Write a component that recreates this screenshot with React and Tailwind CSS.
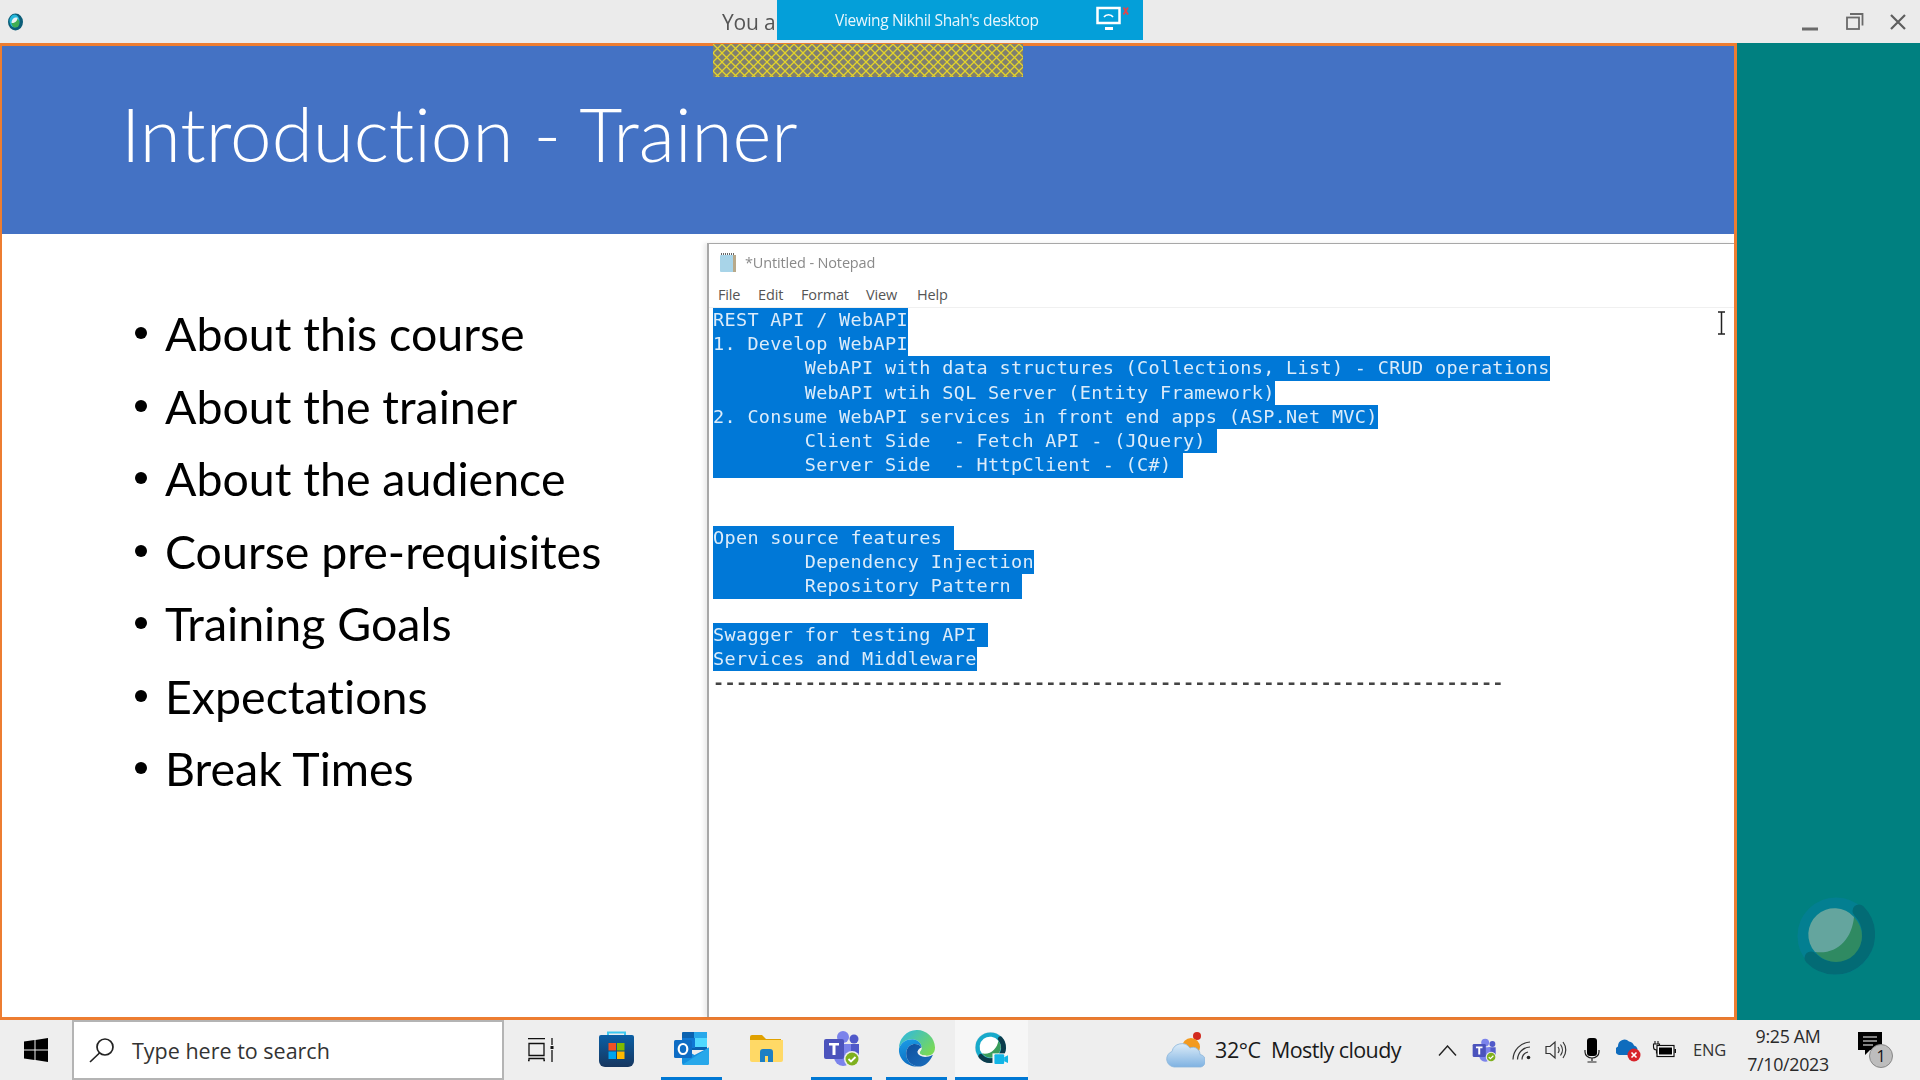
import React from "react";

const bullets = ["About this course","About the trainer","About the audience","Course pre-requisites","Training Goals","Expectations","Break Times"];
const T = "        ";
const noteLines = [
  ["REST API / WebAPI",1],["1. Develop WebAPI",1],
  [T+"WebAPI with data structures (Collections, List) - CRUD operations",1],
  [T+"WebAPI wtih SQL Server (Entity Framework)",1],
  ["2. Consume WebAPI services in front end apps (ASP.Net MVC)",1],
  [T+"Client Side  - Fetch API - (JQuery) ",1],
  [T+"Server Side  - HttpClient - (C#) ",1],
  ["",0],["",0],
  ["Open source features ",1],
  [T+"Dependency Injection",1],
  [T+"Repository Pattern ",1],
  ["",0],
  ["Swagger for testing API ",1],
  ["Services and Middleware",1],
  ["-".repeat(69),0],
];

const WebexIcon = ({size=32}) => (
  <svg width={size} height={size} viewBox="0 0 36 36">
    <circle cx="17" cy="17" r="16" fill="#d9dfe2"/>
    <circle cx="17" cy="17" r="13" fill="none" stroke="#18aacb" strokeWidth="5"/>
    <path d="M27 8 A13 13 0 0 1 7 26" fill="none" stroke="#0b3c4c" strokeWidth="5" strokeLinecap="round"/>
    <circle cx="17" cy="17" r="10.500" fill="#3a9e5c"/>
    <path d="M8 23 A10.500 10.500 0 0 1 25 10 C24 18 17 25 8 23Z" fill="#ffffff"/>
    <rect x="19" y="23" width="17" height="13" fill="#f6f6f6"/>
    <rect x="21" y="24" width="10" height="10" rx="1" fill="#12b5e6"/>
    <path d="M31 27l4-2v8l-4-2z" fill="#12b5e6"/>
  </svg>
);

const TeamsIcon = ({size=38}) => (
  <svg width={size} height={size} viewBox="0 0 38 38">
    <circle cx="20" cy="7" r="6" fill="#7b83eb"/>
    <circle cx="31" cy="9" r="4.500" fill="#5059c9"/>
    <path d="M25 14h11v11a6 6 0 0 1-6 6h-5z" fill="#5059c9"/>
    <path d="M11 14h17v14a8 8 0 0 1-8 8 9 9 0 0 1-9-9z" fill="#7b83eb"/>
    <rect x="1" y="9" width="20" height="20" rx="2" fill="#4b53bc"/>
    <path d="M6 13h10v2.500h-3.500V25h-3v-9.500H6z" fill="#fff"/>
    <circle cx="29" cy="29" r="8" fill="#eee"/>
    <circle cx="29" cy="29" r="6.500" fill="#7fb01e"/>
    <path d="M25.500 29l2.500 2.500 4.500-4.500" fill="none" stroke="#fff" strokeWidth="1.800"/>
  </svg>
);

const AppSlot = ({children, active}) => (
  <div className={`flex h-full w-[61px] mx-[7px] shrink-0 items-center justify-center border-b-[3px] ${active ? "border-[#0078d4]" : "border-transparent"}`}>{children}</div>
);

export default function App() {
  return (
    <div className="relative flex h-[1080px] w-[1920px] flex-col overflow-hidden bg-[#eeeeee] [font-family:'Open_Sans','Noto_Sans',sans-serif]">
      {/* title bar */}
      <div className="flex h-[43px] shrink-0 items-center bg-[#ebebeb]">
        <div className="ml-[7px] flex w-[17px] justify-center">
          <svg width="17" height="20" viewBox="0 0 17 20">
            <ellipse cx="8.500" cy="10" rx="7.500" ry="8.500" fill="#0b5d78"/>
            <ellipse cx="7.500" cy="9" rx="5" ry="6.500" fill="#25b8dc"/>
            <ellipse cx="8.500" cy="11" rx="4" ry="4.500" fill="#3fae52"/>
            <path d="M4.500 11 C4.500 7 7 5 10.500 5.500 C11 8 8 11.500 4.500 11Z" fill="#e9f2f2"/>
          </svg>
        </div>
        <span className="ml-[698px] mt-[2px] text-[21px] leading-none tracking-[-0.2px] text-[#555555] blur-[0.3px]">You a</span>
        <div className="ml-auto flex items-center pr-[14px]">
          <svg width="16" height="4" className="mt-[15px]"><rect width="16" height="3" y="0.500" fill="#6a6a6a"/></svg>
          <svg className="ml-[28px] mb-[1px]" width="18" height="18" viewBox="0 0 18 18" fill="none" stroke="#6a6a6a" strokeWidth="1.800"><rect x="1" y="5.500" width="12" height="11.500"/><path d="M4 2h12.500v11.500"/></svg>
          <svg className="ml-[26px]" width="16" height="16" viewBox="0 0 16 16" stroke="#5e5e5e" strokeWidth="2.200"><path d="M1 1l14 14M15 1L1 15"/></svg>
        </div>
      </div>

      {/* main */}
      <div className="flex min-h-0 flex-1">
        <div className="flex w-[1737px] shrink-0 flex-col border-x-[2px] border-b-[3px] border-t-[3px] border-[#ed7d31] border-r-[3px] bg-white">
          <div className="flex h-[188px] shrink-0 items-center bg-[#4472c4] pb-[14px] pl-[119px]">
            <h1 className="text-[74.500px] font-light leading-none text-white [font-family:'Lato',sans-serif] [font-variant-ligatures:none] blur-[0.3px]">Introduction - Trainer</h1>
          </div>
          <div className="flex min-h-0 flex-1">
            <ul className="flex w-[705px] shrink-0 flex-col pl-[133px] pt-[63px] [font-family:'Lato',sans-serif]">
              {bullets.map(b => (
                <li key={b} className="flex h-[72.500px] items-center text-black">
                  <span className="mr-[18px] h-[12px] w-[12px] rounded-full bg-black"></span>
                  <span className="text-[46.500px] leading-none whitespace-nowrap [font-variant-ligatures:none] blur-[0.3px]">{b}</span>
                </li>
              ))}
            </ul>
            <div className="mt-[9px] flex min-w-0 flex-1 flex-col border-l-[2px] border-t border-[#a8a8a8] bg-white shadow-[-3px_0_4px_rgba(0,0,0,0.08)]">
              <div className="flex h-[37px] shrink-0 items-center pl-[9px]">
                <svg width="21" height="21" viewBox="0 0 21 21">
                  <rect x="2" y="3" width="16" height="17" rx="1" fill="#a8d4e8"/>
                  <path d="M15 3h3v17h-3z" fill="#b8a98a"/>
                  <path d="M3 2h14" stroke="#666" strokeWidth="2" strokeDasharray="1 1"/>
                </svg>
                <span className="ml-[6px] text-[14.500px] tracking-[-0.15px] text-[#8a8a8a] blur-[0.3px]">*Untitled - Notepad</span>
              </div>
              <div className="flex h-[27px] shrink-0 items-center border-b border-[#f0f0f0] pl-[9px] pt-[1px] text-[14.500px] tracking-[-0.15px] text-[#555555]">
                <span className="w-[40px]">File</span>
                <span className="w-[43px]">Edit</span>
                <span className="w-[65px]">Format</span>
                <span className="w-[51px]">View</span>
                <span>Help</span>
              </div>
              <div className="relative min-h-0 flex-1 pl-[4px] text-[18.500px] tracking-[0.323px] [font-family:'DejaVu_Sans_Mono',monospace]">
                <div className="blur-[0.4px]">
                  {noteLines.map(([t, sel], i) => (
                    <div key={i} className={`h-[24.220px] w-fit min-w-[1px] whitespace-pre leading-[24.220px] ${sel ? "bg-[#0078d7] text-[#dcecfa]" : "font-bold text-[#444444]"}`}>{t}</div>
                  ))}
                </div>
                <svg className="absolute right-[7px] top-[3px]" width="11" height="24" viewBox="0 0 11 24" fill="none" stroke="#222" strokeWidth="1.500"><path d="M2 1h7M5.500 1v22M2 23h7"/></svg>
              </div>
            </div>
          </div>
        </div>
        <div className="flex flex-1 items-end justify-end bg-[#008080] pb-[45px] pr-[45px]">
          <svg width="78" height="78" viewBox="0 0 78 78">
            <circle cx="39" cy="39" r="32" fill="none" stroke="#037f91" strokeWidth="13"/>
            <path d="M62 14 A32 32 0 0 1 14 61" fill="none" stroke="#036b75" strokeWidth="13" strokeLinecap="round"/>
            <circle cx="39" cy="39" r="26" fill="#2f8a62"/>
            <path d="M18 55 A26 26 0 0 1 57 20 C55 42 40 58 18 55Z" fill="#64a59e"/>
          </svg>
        </div>
      </div>

      {/* taskbar */}
      <div className="flex h-[60px] shrink-0 items-center bg-[#eeeeee]">
        <div className="flex h-full w-[72px] shrink-0 items-center justify-center">
          <svg width="24" height="24" viewBox="0 0 24 24" fill="#000"><path d="M0 3.500l10.500-1.500v9.500H0zM11.500 1.900L24 0v11.500H11.500zM0 12.500h10.500V22L0 20.500zM11.500 12.500H24V24l-12.500-1.900z"/></svg>
        </div>
        <div className="flex h-full w-[432px] shrink-0 items-center border-2 border-[#b4b4b4] bg-white pl-[15px]">
          <svg width="26" height="26" viewBox="0 0 26 26" fill="none" stroke="#222" strokeWidth="1.700"><circle cx="16" cy="10" r="8"/><path d="M10.500 16L1 25"/></svg>
          <span className="ml-[17px] mt-[2px] text-[21.500px] tracking-[0px] text-[#333333]">Type here to search</span>
        </div>
        <div className="flex h-full w-[75px] shrink-0 items-center justify-center pr-[2px]">
          <svg width="26" height="24" viewBox="0 0 26 24" fill="none" stroke="#111" strokeWidth="1.300"><path d="M0 .700h17M1 5.500h15v12H1zM0 22.500h1v-2h15v2h1M24 0v7M24 12v12"/><rect x="22.500" y="8" width="3" height="3" fill="#111" stroke="none"/></svg>
        </div>
        <div className="flex h-full shrink-0 items-center">
          <AppSlot>
            <svg width="35" height="36" viewBox="0 0 35 36">
              <defs><linearGradient id="st" x1="0" y1="0" x2="0" y2="1"><stop offset="0" stopColor="#0b5fa5"/><stop offset="1" stopColor="#16365f"/></linearGradient></defs>
              <path d="M9 4V1.500h17V4" fill="none" stroke="#3cc8f0" strokeWidth="2"/>
              <path d="M0 6a2 2 0 0 1 2-2h31a2 2 0 0 1 2 2v24a6 6 0 0 1-6 6H6a6 6 0 0 1-6-6z" fill="url(#st)"/>
              <rect x="9.500" y="12" width="7.500" height="7.500" fill="#f25022"/><rect x="18" y="12" width="7.500" height="7.500" fill="#7fba00"/>
              <rect x="9.500" y="20.500" width="7.500" height="7.500" fill="#00a4ef"/><rect x="18" y="20.500" width="7.500" height="7.500" fill="#ffb900"/>
            </svg>
          </AppSlot>
          <AppSlot active>
            <svg width="35" height="34" viewBox="0 0 35 34">
              <rect x="8" y="0" width="25" height="18" rx="1" fill="#0a62b0"/>
              <rect x="20" y="0" width="13" height="8" fill="#28a8ea"/><rect x="20" y="6" width="13" height="9" fill="#50d9ff"/><rect x="8" y="6" width="13" height="10" fill="#0f78d4"/>
              <path d="M8 16l12.500 7L35 15.500V31a2 2 0 0 1-2 2H10a2 2 0 0 1-2-2z" fill="#1490df"/>
              <path d="M8 33l27-17.500V31a2 2 0 0 1-2 2z" fill="#28a8ea"/>
              <rect x="0" y="8" width="18" height="18" rx="1.500" fill="#0e6cc4"/>
              <ellipse cx="9" cy="17" rx="4.300" ry="5" fill="none" stroke="#fff" strokeWidth="2.200"/>
            </svg>
          </AppSlot>
          <AppSlot>
            <svg width="33" height="27" viewBox="0 0 33 27">
              <path d="M0 2a2 2 0 0 1 2-2h10l4 4h15v6H0z" fill="#e0a100"/>
              <path d="M0 5h33v20a2 2 0 0 1-2 2H2a2 2 0 0 1-2-2z" fill="#ffd966"/>
              <path d="M10 27V17a3 3 0 0 1 3-3h7a3 3 0 0 1 3 3v10h-5v-6h-3v6z" fill="#1d7fc4"/>
            </svg>
          </AppSlot>
          <AppSlot active><TeamsIcon/></AppSlot>
          <AppSlot active>
            <svg width="37" height="37" viewBox="0 0 36 36">
              <defs>
                <linearGradient id="e1" x1="0" y1="0" x2="1" y2="0.700"><stop offset="0" stopColor="#2ab6ea"/><stop offset="1" stopColor="#79d957"/></linearGradient>
                <linearGradient id="e2" x1="0" y1="0" x2="0.300" y2="1"><stop offset="0" stopColor="#1c9fe8"/><stop offset="1" stopColor="#0c6cc0"/></linearGradient>
                <linearGradient id="e3" x1="0" y1="0" x2="1" y2="1"><stop offset="0" stopColor="#0f4f9e"/><stop offset="1" stopColor="#1a6fbe"/></linearGradient>
              </defs>
              <path d="M1 18A17.500 17.500 0 0 1 36 17C36 23 32 25 28 25C24 25 21 24 21 22C21 21 23 20 23 17C23 13 19 9 14 9C8 9 3 12 1 18Z" fill="url(#e1)"/>
              <path d="M1 18C3 12 8 9 14 9C19 9 23 13 23 17C21 14 17 13 14 14C10 15 8 19 8 23C8 29 12 34 19 35.500C9 36 0 28 1 18Z" fill="url(#e2)"/>
              <path d="M8 23C8 19 10 15 14 14C17 13 21 14 23 17C21 18 19 20 19 22C20 26 27 28 34 24C31 31 26 36 19 35.500C12 34 8 29 8 23Z" fill="url(#e3)"/>
              <path d="M19 21C20 18 22 17 23 17C23 20 21 21 21 22C21 24 24 25 28 25C24 26 20 25 19 21Z" fill="#eeeeee"/>
            </svg>
          </AppSlot>
        </div>
        <div className="ml-[1px] flex h-full w-[73px] shrink-0 items-center justify-center border-b-[3px] border-[#0078d4] bg-[#f6f6f6]">
          <WebexIcon size={35} />
        </div>

        {/* tray */}
        <div className="ml-auto flex h-full items-center">
          <svg width="39" height="36" viewBox="0 0 39 36">
            <circle cx="31" cy="4" r="4" fill="#d22a1f"/>
            <circle cx="25" cy="15" r="9" fill="#f39a1f"/>
            <defs><linearGradient id="cl" x1="0" y1="0" x2="0" y2="1"><stop offset="0" stopColor="#dcecf8"/><stop offset="1" stopColor="#7fb2e2"/></linearGradient></defs>
            <path d="M8 35a8 8 0 0 1-2-15.500A10 10 0 0 1 24 16a7 7 0 0 1 10 6.500 6.500 6.500 0 0 1 1 12.500z" fill="url(#cl)" stroke="#8cb6dc" strokeWidth=".8"/>
          </svg>
          <span className="ml-[10px] mt-[1px] w-[43px] whitespace-nowrap text-[21.500px] tracking-[-0.4px] text-[#1a1a1a]">32°C</span>
          <span className="ml-[13px] mt-[1px] w-[130px] whitespace-nowrap text-[21.500px] tracking-[-0.6px] text-[#1a1a1a]">Mostly cloudy</span>
          <svg className="ml-[37px]" width="19" height="11" viewBox="0 0 19 11" fill="none" stroke="#222" strokeWidth="1.400"><path d="M1 10.500L9.500 1 18 10.500"/></svg>
          <div className="ml-[15px] flex w-[25px] justify-center"><TeamsIcon size={25}/></div>
          <svg className="ml-[15px]" width="20" height="20" viewBox="0 0 20 20" fill="none" stroke="#333" strokeWidth="1.200"><path d="M1 19.500A18 18 0 0 1 18 2M5.500 19.500A13 13 0 0 1 18 7M10 19.500A8 8 0 0 1 16 12"/><circle cx="16.500" cy="17.500" r="1.800" fill="#222" stroke="none"/></svg>
          <svg className="ml-[13px]" width="22" height="22" viewBox="0 0 22 22" fill="none" stroke="#333" strokeWidth="1.200"><path d="M1 7.500h4L10 3v16l-5-4.500H1z"/><path d="M13 8a5 5 0 0 1 0 6M15.500 5.500a9 9 0 0 1 0 11M18 3a13 13 0 0 1 0 16"/></svg>
          <svg className="ml-[17px]" width="16" height="25" viewBox="0 0 16 25"><rect x="3" y="0" width="10" height="18" rx="3" fill="#000"/><path d="M1 12v2a7 6 0 0 0 14 0v-2M8 20v3M3.500 24h9" fill="none" stroke="#222" strokeWidth="1.200"/></svg>
          <svg className="ml-[16px]" width="25" height="24" viewBox="0 0 25 24">
            <path d="M3 17a4.500 4.500 0 0 1-1-8.500A6.500 6.500 0 0 1 13 3.500a6 6 0 0 1 5 4 4 4 0 0 1 2 7v2.500z" fill="#0f6cbd"/>
            <circle cx="18" cy="17" r="6.500" fill="#d8232a"/>
            <path d="M15.500 14.500l5 5M20.500 14.500l-5 5" stroke="#fff" strokeWidth="1.600"/>
          </svg>
          <svg className="ml-[11px]" width="24" height="18" viewBox="0 0 24 18"><path d="M3 0v3M6 0v3M1.500 3h6v3a3 3 0 0 1-6 0zM4.500 9v3h3" fill="none" stroke="#111" strokeWidth="1.100"/><rect x="5" y="4.500" width="17" height="11" fill="#fff" stroke="#111" strokeWidth="1.200"/><rect x="7" y="6.500" width="13" height="7" fill="#000"/><rect x="22.500" y="8" width="1.500" height="4" fill="#111"/></svg>
          <span className="ml-[17px] w-[34px] whitespace-nowrap text-[16.500px] tracking-[-0.2px] text-[#333333]">ENG</span>
          <div className="ml-[19px] flex w-[84px] flex-col items-center text-[17.800px] tracking-[-0.3px] leading-[28px] text-[#2a2a2a]">
            <span className="whitespace-nowrap">9:25 AM</span>
            <span className="whitespace-nowrap">7/10/2023</span>
          </div>
          <div className="relative ml-[28px] mr-[38px] h-[36px] w-[24px] self-center">
            <svg width="24" height="24" viewBox="0 0 24 24"><path d="M0 0h24v18H12l-5 5v-5H0z" fill="#000"/><path d="M5 5h14M5 9h14M5 13h10" stroke="#fff" strokeWidth="1.200"/></svg>
            <span className="absolute left-[11px] top-[12px] flex h-[24px] w-[24px] items-center justify-center rounded-full border border-[#888] bg-[#bdbdbd] text-[16px] text-[#111]">1</span>
          </div>
        </div>
      </div>

      {/* overlays */}
      <div className="absolute left-[777px] top-0 flex h-[40px] w-[366px] items-center bg-[#049fd9] text-white">
        <span className="ml-[58px] mt-[1px] whitespace-nowrap text-[15.500px] tracking-[-0.35px] text-[#e8f6fc] blur-[0.3px]">Viewing Nikhil Shah's desktop</span>
        <svg className="absolute left-[319px] top-[6px]" width="36" height="26" viewBox="0 0 36 26" fill="none">
          <rect x="1.500" y="2" width="22" height="15" stroke="#fff" strokeWidth="2.500"/>
          <path d="M8 11a5 4 0 0 1 9 0" stroke="#fff" strokeWidth="1.600"/>
          <rect x="9" y="21" width="8" height="3" fill="#fff"/>
          <path d="M27.500 1.500l4.500 7M32 1.500l-4.500 7" stroke="#e0474c" strokeWidth="2"/>
        </svg>
      </div>
      <svg className="absolute left-[713px] top-[44px]" width="310" height="33">
        <defs>
          <pattern id="hatch" width="9" height="9" patternUnits="userSpaceOnUse">
            <rect width="9" height="9" fill="#7f7f70"/>
            <path d="M0 0L9 9M9 0L0 9" stroke="#e3d32a" strokeWidth="1.300"/>
          </pattern>
        </defs>
        <rect width="310" height="33" fill="url(#hatch)"/>
      </svg>
    </div>
  );
}
